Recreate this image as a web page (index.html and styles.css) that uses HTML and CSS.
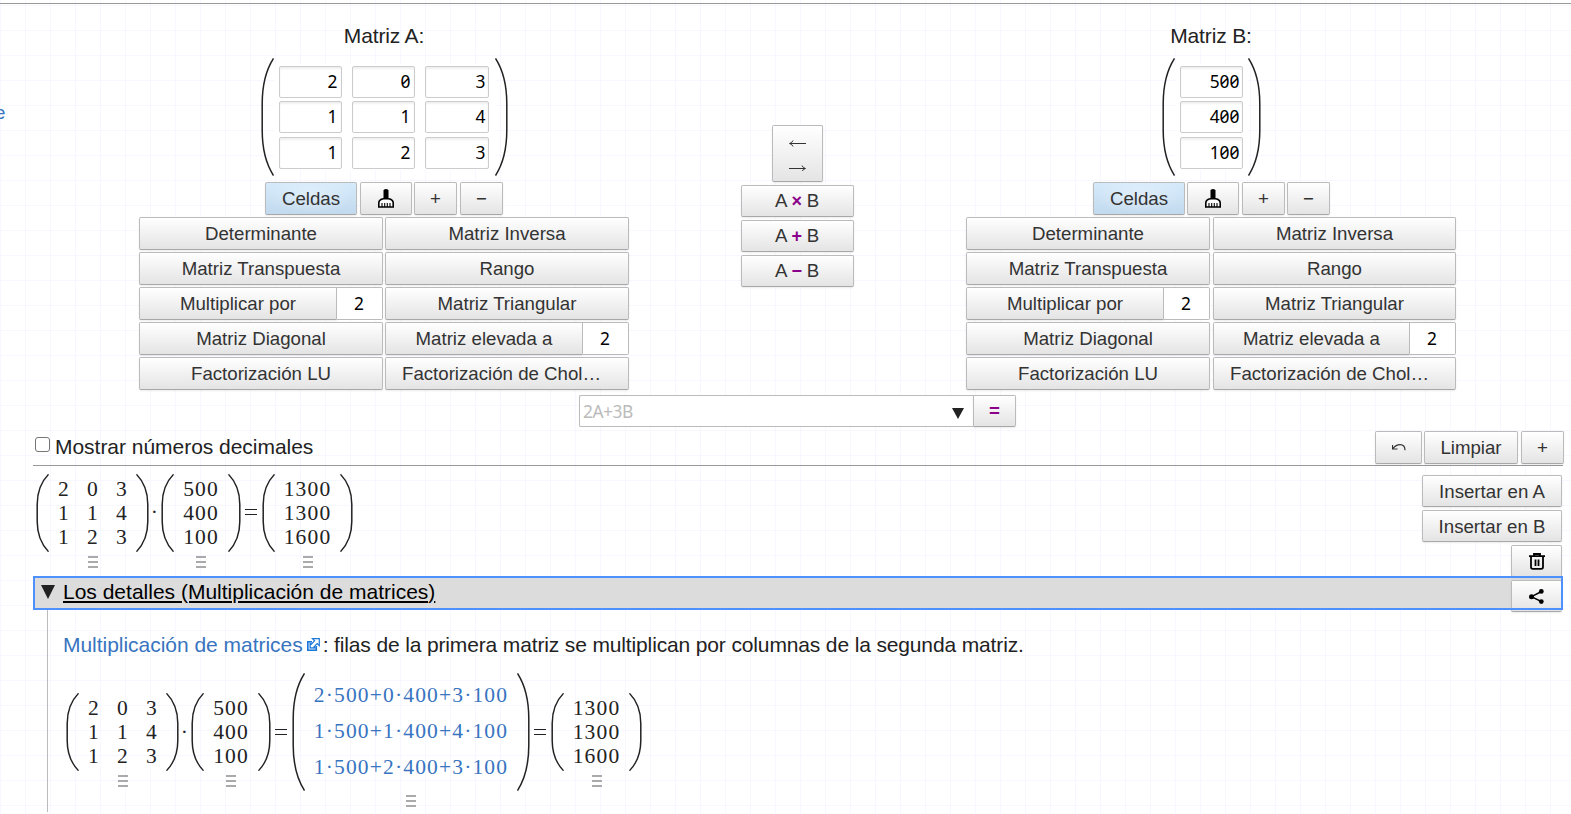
FILE: index.html
```html
<!DOCTYPE html>
<html lang="es">
<head>
<meta charset="utf-8">
<title>Calculadora de matrices</title>
<link rel="stylesheet" href="styles.css">
</head>
<body>
<svg class="defs" width="0" height="0">
  <symbol id="brush" viewBox="0 0 16 19"><path d="M5.500 1.500q0-1.500 2.500-1.500t2.500 1.500V9.500h-5z"/><path d="M5.500 9.800h5q4.700 .7 4.700 4.200v4H.8v-4q0-3.500 4.700-4.200z" fill="#fff" stroke="#000" stroke-width="1.600"/><path d="M4 14v4M6.700 14v4M9.300 14v4M12 14v4" stroke="#000" stroke-width="1.100"/></symbol>
  <symbol id="trash" viewBox="0 0 16 17"><path d="M0 3.200h16M5 3V1h6v2M2 3.500V14q0 1.800 1.800 1.800h8.400Q14 15.800 14 14V3.500M6.500 6.500v6.500M9.500 6.500v6.500" fill="none" stroke="#000" stroke-width="1.800"/></symbol>
  <symbol id="share" viewBox="0 0 15 15"><path d="M12.500 2.500L2.500 7.700l10 5" fill="none" stroke="#000" stroke-width="1.500"/><circle cx="2.500" cy="7.700" r="2.500"/><circle cx="12.300" cy="2.400" r="2.400"/><circle cx="12.300" cy="12.600" r="2.400"/></symbol>
  <symbol id="open" viewBox="0 0 13 118" preserveAspectRatio="none"><path d="M12.500 .5Q1.200 18 1.200 46V72Q1.200 100 12.500 117.500" fill="none" stroke="#222" stroke-width="1.500"/></symbol>
  <symbol id="close" viewBox="0 0 13 118" preserveAspectRatio="none"><path d="M.5 .5Q11.800 18 11.800 46V72Q11.800 100 .5 117.500" fill="none" stroke="#222" stroke-width="1.500"/></symbol>
</svg>
<span class="side-link">e</span>
<hr class="top-rule">

<div class="calculator">
  <section class="panel">
    <h2 class="panel-title">Matriz A:</h2>
    <div class="input-matrix">
      <svg class="paren"><use href="#open"/></svg>
      <div class="cells cells-3"><span>2</span><span>0</span><span>3</span><span>1</span><span>1</span><span>4</span><span>1</span><span>2</span><span>3</span></div>
      <svg class="paren"><use href="#close"/></svg>
    </div>
    <div class="tools tools-a">
      <button class="btn active">Celdas</button><button class="btn brush"><svg width="16" height="19"><use href="#brush"/></svg></button><button class="btn sign">+</button><button class="btn sign">−</button>
    </div>
    <div class="ops">
      <button class="btn">Determinante</button><button class="btn">Matriz Inversa</button>
      <button class="btn">Matriz Transpuesta</button><button class="btn">Rango</button>
      <div class="split"><button class="btn">Multiplicar por</button><span class="num">2</span></div><button class="btn">Matriz Triangular</button>
      <button class="btn">Matriz Diagonal</button><div class="split"><button class="btn">Matriz elevada a</button><span class="num">2</span></div>
      <button class="btn">Factorización LU</button><button class="btn chol">Factorización de Chol…</button>
    </div>
  </section>

  <section class="middle">
    <button class="btn swap">
      <svg width="17" height="31" viewBox="0 0 17 31"><path d="M17 3.500H1M4 .5Q3 3 .5 3.500Q3 4 4 6.500M0 28.500h16M13 25.500q1 2.500 3.500 3q-2.500 .5-3.500 3" fill="none" stroke="#333"/></svg>
    </button>
    <button class="btn">A <b>×</b> B</button>
    <button class="btn">A <b>+</b> B</button>
    <button class="btn">A <b>−</b> B</button>
  </section>

  <section class="panel">
    <h2 class="panel-title">Matriz B:</h2>
    <div class="input-matrix">
      <svg class="paren"><use href="#open"/></svg>
      <div class="cells"><span>500</span><span>400</span><span>100</span></div>
      <svg class="paren"><use href="#close"/></svg>
    </div>
    <div class="tools tools-b">
      <button class="btn active">Celdas</button><button class="btn brush"><svg width="16" height="19"><use href="#brush"/></svg></button><button class="btn sign">+</button><button class="btn sign">−</button>
    </div>
    <div class="ops ops-b">
      <button class="btn">Determinante</button><button class="btn">Matriz Inversa</button>
      <button class="btn">Matriz Transpuesta</button><button class="btn">Rango</button>
      <div class="split"><button class="btn">Multiplicar por</button><span class="num">2</span></div><button class="btn">Matriz Triangular</button>
      <button class="btn">Matriz Diagonal</button><div class="split"><button class="btn">Matriz elevada a</button><span class="num">2</span></div>
      <button class="btn">Factorización LU</button><button class="btn chol">Factorización de Chol…</button>
    </div>
  </section>
</div>

<div class="expression">
  <div class="field"><span>2A+3B</span><i class="caret"></i></div>
  <button class="btn equals"><b>=</b></button>
</div>

<main class="results">
  <div class="bar">
    <label class="decimals"><span class="box"></span>Mostrar números decimales</label>
    <div class="bar-buttons">
      <button class="btn undo"><svg width="14" height="8" viewBox="0 0 14 8"><path d="M.5 1v4h5M1 4.500Q4 .7 8 .7q5 0 5 5.500" fill="none" stroke="#333" stroke-width="1.200"/></svg></button><button class="btn clear">Limpiar</button><button class="btn sign">+</button>
    </div>
  </div>

  <div class="result">
    <div class="actions">
      <button class="btn wide">Insertar en A</button>
      <button class="btn wide">Insertar en B</button>
      <button class="btn"><svg width="16" height="17"><use href="#trash"/></svg></button>
      <button class="btn"><svg width="15" height="15"><use href="#share"/></svg></button>
    </div>

    <div class="equation first">
      <div class="matrix three"><svg class="paren"><use href="#open"/></svg><div class="grid"><span>2</span><span>0</span><span>3</span><span>1</span><span>1</span><span>4</span><span>1</span><span>2</span><span>3</span></div><svg class="paren"><use href="#close"/></svg><i class="menu"></i></div>
      <span class="op">·</span>
      <div class="matrix hundreds"><svg class="paren"><use href="#open"/></svg><div class="grid"><span>500</span><span>400</span><span>100</span></div><svg class="paren"><use href="#close"/></svg><i class="menu"></i></div>
      <span class="eq"></span>
      <div class="matrix thousands"><svg class="paren"><use href="#open"/></svg><div class="grid"><span>1300</span><span>1300</span><span>1600</span></div><svg class="paren"><use href="#close"/></svg><i class="menu"></i></div>
    </div>

    <div class="summary"><i class="caret"></i><span>Los detalles (Multiplicación de matrices)</span></div>
    <div class="details">
      <p class="rule"><a class="link">Multiplicación de matrices</a><svg class="external" width="13" height="13" viewBox="0 0 13 13"><path d="M5 3.700H.8v8.500h8.500V8" fill="#d5e8fb" stroke="#1d78d8" stroke-width="1.600"/><path d="M5.500 .7h6.800v6.800L10.200 5.500 7 8.700l1 1.200H3.200V5.200l1.200 1L7.600 2.800z" fill="#fff" stroke="#1d78d8" stroke-width="1.200"/></svg>: filas de la primera matriz se multiplican por columnas de la segunda matriz.</p>
      <div class="equation">
        <div class="matrix three"><svg class="paren"><use href="#open"/></svg><div class="grid"><span>2</span><span>0</span><span>3</span><span>1</span><span>1</span><span>4</span><span>1</span><span>2</span><span>3</span></div><svg class="paren"><use href="#close"/></svg><i class="menu"></i></div>
        <span class="op">·</span>
        <div class="matrix hundreds"><svg class="paren"><use href="#open"/></svg><div class="grid"><span>500</span><span>400</span><span>100</span></div><svg class="paren"><use href="#close"/></svg><i class="menu"></i></div>
        <span class="eq"></span>
        <div class="matrix sums"><svg class="paren"><use href="#open"/></svg><div class="grid"><span>2·500+0·400+3·100</span><span>1·500+1·400+4·100</span><span>1·500+2·400+3·100</span></div><svg class="paren"><use href="#close"/></svg><i class="menu"></i></div>
        <span class="eq"></span>
        <div class="matrix thousands"><svg class="paren"><use href="#open"/></svg><div class="grid"><span>1300</span><span>1300</span><span>1600</span></div><svg class="paren"><use href="#close"/></svg><i class="menu"></i></div>
      </div>
    </div>
  </div>
</main>
</body>
</html>
```
FILE: styles.css
```css
* { box-sizing: border-box; }
body {
  margin: 0;
  height: 814px;
  overflow: hidden;
  position: relative;
  color: #222;
  font: 21px/24px "Liberation Sans", Arial, sans-serif;
  letter-spacing: -.03px;
  background-color: #fff;
  background-image:
    linear-gradient(#f7f7ff 1px, transparent 1px),
    linear-gradient(90deg, #f7f7ff 1px, transparent 1px);
  background-size: 25px 25px;
  background-position: 0 5px, 0 0;
}
.defs { position: absolute; }
.side-link { position: absolute; left: -5px; top: 101px; color: #3874c0; font-size: 18.67px; }
.top-rule { margin: 3px 0 0; border: 0; height: 1px; background: #999; }

.btn {
  display: flex;
  align-items: center;
  justify-content: center;
  height: 33px;
  padding: 0;
  border: 1px solid #bbb;
  border-bottom-color: #a8a8a8;
  border-radius: 2px;
  background: linear-gradient(#fff, #e4e4e4);
  box-shadow: 0 1px 2px rgba(0, 0, 0, .08);
  color: #333;
  font: 18.67px/24px "Liberation Sans", Arial, sans-serif;
  white-space: pre;
}
.btn b { color: #8b008b; }
.btn.active {
  width: 92px;
  background: radial-gradient(ellipse at 50% 40%, rgba(255, 255, 255, .35), transparent 70%), linear-gradient(#d5eafb, #c2daee);
}
.brush { width: 52px; }
.sign { width: 43px; }

.calculator { display: flex; padding-left: 139px; gap: 112px; height: 391px; }
.panel { width: 490px; }
.panel-title { margin: 20px 0 0; font: inherit; letter-spacing: -.15px; text-align: center; }
.input-matrix { display: flex; justify-content: center; margin-top: 10px; height: 118px; }
.input-matrix .paren { width: 13px; height: 118px; }
.cells {
  display: grid;
  grid-template-columns: 63px;
  gap: 3px 10px;
  margin: 7px 0 6px;
  padding: 1px 5px;
  background: #fff;
}
.cells-3 { grid-template-columns: 63px 63px 64px; padding-right: 6px; }
.cells span {
  height: 32px;
  padding-right: 2px;
  border: 1px solid #ccc;
  border-radius: 2px;
  box-shadow: inset 0 2px 2px #f0f0f0;
  text-align: right;
  line-height: 28px;
}
.cells-3 span { padding-right: 3px; }
.cells-3 span:nth-child(3n) { padding-right: 2px; }
.cells span, .num, .field { color: #000; font-family: "Noto Sans", sans-serif; font-size: 17.400px; font-feature-settings: "zero"; letter-spacing: 0; }
.tools { display: flex; margin-top: 6px; }
.tools-a { padding-left: 126px; gap: 3px; }
.tools-b { padding-left: 127px; gap: 2px; }
.tools-a .brush + .sign { margin-left: -1px; }
.tools-b .brush + .sign { margin-left: 1px; }
.ops { display: grid; grid-template-columns: 244px 244px; gap: 2px; margin-top: 2px; }
.ops-b { grid-template-columns: 244px 243px; column-gap: 3px; }
.split { display: flex; }
.split .btn { flex: 1; border-radius: 2px 0 0 2px; }
.num { width: 46px; height: 33px; border: 1px solid #bbb; border-left: 0; border-radius: 0 2px 2px 0; background: #fff; text-align: center; line-height: 30px; padding-right: 1px; }
.chol { justify-content: flex-start; padding-left: 16px; }

.middle { width: 113px; padding-top: 121px; display: flex; flex-direction: column; gap: 3px; }
.middle .btn { height: 32px; padding-right: 1px; }
.middle .btn b { font-size: 18px; width: 10px; text-align: center; }
.middle .swap { width: 51px; height: 57px; align-self: center; padding-top: 3px; }

.expression { display: flex; padding-left: 579px; height: 36px; }
.field { display: flex; align-items: center; justify-content: space-between; width: 394px; height: 32px; padding: 0 9px 0 3px; border: 1px solid #bbb; border-right: 0; border-radius: 2px 0 0 2px; background: #fff; color: #bbb; }
.field span { letter-spacing: -.5px; }
.caret { border: 6px solid transparent; border-top: 11px solid #222; border-bottom: 0; }
.field .caret { margin-top: 5px; }
.equals { width: 43px; height: 32px; border-radius: 0 2px 2px 0; }

.results { padding: 0 7px 0 33px; }
.bar { display: flex; justify-content: space-between; height: 35px; border-bottom: 1px solid #999; width: 1530px; }
.decimals { display: flex; align-items: flex-start; padding: 4px 0 0 2px; line-height: 24px; }
.box { width: 15px; height: 15px; margin: 2px 5px 0 0; border: 1px solid #767676; border-radius: 3px; background: #fff; }
.bar-buttons { display: flex; gap: 2px; margin-right: -1px; }
.undo { width: 47px; }
.clear { width: 94px; margin-right: 1px; }
.result { position: relative; width: 1530px; }
.actions { position: absolute; z-index: 1; top: 9px; right: 1px; display: flex; flex-direction: column; align-items: flex-end; gap: 3px; }
.actions .btn { width: 51px; height: 32px; }
.actions .wide { width: 140px; padding-top: 1px; }

.equation { display: flex; align-items: center; color: #222; font: 21.5px/24px "Liberation Serif", serif; letter-spacing: 1.15px; }
.equation.first { padding: 8px 0 0 3px; height: 110px; align-items: flex-start; }
.matrix { position: relative; display: flex; height: 78px; }
.matrix .paren { width: 13px; height: 78px; }
.three { width: 113px; }
.hundreds { width: 80px; }
.thousands { width: 91px; }
.sums { width: 238px; color: #3874c0; }
.grid { flex: 1; min-width: 0; display: grid; grid-template-rows: repeat(3, 24px); align-content: center; justify-content: center; text-align: center; }
.grid span { white-space: nowrap; }
.first .grid { padding-bottom: 1px; }
.three .grid { grid-template-columns: repeat(3, 29px); padding-left: 1px; }
.sums, .matrix.sums .paren { height: 118px; }
.sums .grid { grid-template-rows: repeat(3, 36px); line-height: 36px; padding-bottom: 2px; }
.menu { position: absolute; left: calc(50% - 5px); top: calc(100% + 4px); width: 10px; height: 12px; background: repeating-linear-gradient(#aaa 0 2px, transparent 2px 5px); }
.op { width: 12px; text-align: center; line-height: 76px; }
.eq { width: 12px; height: 6px; margin: 0 5px 0 4px; border: solid #222; border-width: 1px 0; }
.first .eq { margin-top: 35px; }

.summary { position: relative; height: 34px; padding-left: 8px; display: flex; align-items: center; background: #dcdcdc; color: #000; letter-spacing: 0; }
.summary span { padding-bottom: 3px; text-underline-offset: 2px; text-decoration: underline; text-decoration-thickness: 2px; }
.summary .caret { border-width: 14px 7px 0; margin: 0 8px 2px 0; }
.summary::after { content: ""; position: absolute; z-index: 2; inset: 0; border: 2px solid #4d90fe; }
.details { margin-left: 14px; height: 202px; border-left: 1px solid #bbb; padding-left: 15px; }
.rule { margin: 0; padding-top: 23px; height: 63px; white-space: nowrap; letter-spacing: -.14px; }
.link { color: #3874c0; letter-spacing: -.03px; }
.external { margin: 0 3px 0 4px; vertical-align: 1px; }
.details .equation { padding-left: 3px; }
```
